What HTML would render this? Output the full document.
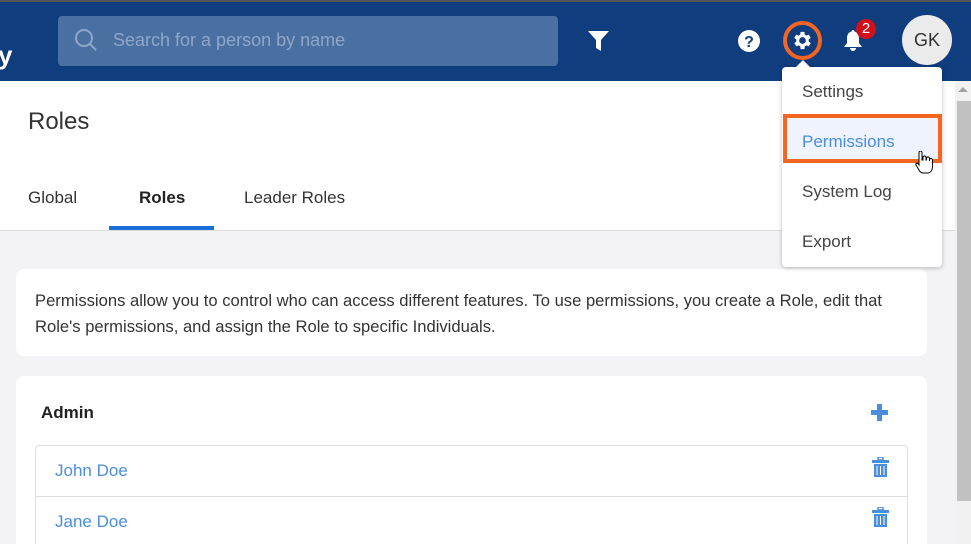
<!DOCTYPE html>
<html style="width:971px;height:544px;overflow:hidden"><head><style>
*{box-sizing:border-box;margin:0;padding:0}
body{width:971px;height:544px;overflow:hidden;font-family:"Liberation Sans",sans-serif;background:#f3f3f5;position:relative}
.hdr{position:absolute;left:0;top:0;width:971px;height:81px;background:#0f3d7e;border-top:2px solid #555}
.abs{position:absolute}
</style></head><body>
<div class="hdr"></div>
<div class="abs" style="left:-2px;top:40px;color:#fff;font-size:26px;font-weight:bold">y</div>
<div class="abs" style="left:58px;top:16px;width:500px;height:50px;border-radius:4px;background:#4a6fa1"></div>
<svg class="abs" style="left:74px;top:28px" width="24" height="24" viewBox="0 0 24 24"><circle cx="10" cy="10" r="8" fill="none" stroke="#8ea7c9" stroke-width="2"/><line x1="16" y1="16" x2="22" y2="22" stroke="#8ea7c9" stroke-width="2"/></svg>
<div class="abs" style="left:113px;top:30px;color:#8ea7c9;font-size:18px">Search for a person by name</div>
<svg class="abs" style="left:588px;top:31px" width="21" height="20" viewBox="0 0 21 20"><path d="M0 0H21L13 9V20L8 17V9Z" fill="#fff"/></svg>
<svg class="abs" style="left:738px;top:30px" width="22" height="22" viewBox="0 0 22 22"><circle cx="11" cy="11" r="11" fill="#fff"/><text x="11" y="17" font-size="16" font-weight="bold" text-anchor="middle" fill="#0f3d7e" font-family="Liberation Sans">?</text></svg>
<div class="abs" style="left:783px;top:21px;width:39px;height:39px;border-radius:50%;border:4px solid #f26522"></div>
<svg class="abs" style="left:791px;top:29px" width="23" height="23" viewBox="0 0 24 24"><path fill="#fff" d="M19.4 13a7.5 7.5 0 0 0 0-2l2.1-1.6-2-3.5-2.5 1a7 7 0 0 0-1.7-1L15 3h-4l-.4 2.9a7 7 0 0 0-1.7 1l-2.5-1-2 3.5L6.6 11a7.5 7.5 0 0 0 0 2l-2.1 1.6 2 3.5 2.5-1a7 7 0 0 0 1.7 1L11 21h4l.4-2.9a7 7 0 0 0 1.7-1l2.5 1 2-3.5zM13 15.5a3.5 3.5 0 1 1 0-7 3.5 3.5 0 0 1 0 7z" transform="translate(-1 0)"/></svg>
<svg class="abs" style="left:843px;top:30px" width="20" height="22" viewBox="0 0 20 22"><path d="M10 0c1 0 1.5.7 1.5 1.5C15 2.5 16 5 16 9v4l3 4H1l3-4V9c0-4 1-6.5 4.5-7.5C8.5.7 9 0 10 0zM7 18h6a3 3 0 0 1-6 0z" fill="#fff"/></svg>
<div class="abs" style="left:856px;top:19px;width:20px;height:20px;border-radius:50%;background:#d0101b;color:#fff;font-size:15px;text-align:center;line-height:20px">2</div>
<div class="abs" style="left:902px;top:15px;width:50px;height:50px;border-radius:50%;background:#ebebeb;color:#333;font-size:18px;text-align:center;line-height:50px">GK</div>
<div class="abs" style="left:0;top:81px;width:955px;height:150px;background:#fff;border-bottom:1px solid #ddd"></div>
<div class="abs" style="left:28px;top:108px;font-size:24px;color:#333">Roles</div>
<div class="abs" style="left:28px;top:188px;font-size:17px;color:#333">Global</div>
<div class="abs" style="left:139px;top:188px;font-size:17px;color:#222;font-weight:bold">Roles</div>
<div class="abs" style="left:109px;top:226px;width:105px;height:4px;background:#1a6ed8"></div>
<div class="abs" style="left:244px;top:188px;font-size:17px;color:#333">Leader Roles</div>
<div class="abs" style="left:955px;top:81px;width:16px;height:463px;background:#f1f1f1"></div>
<div class="abs" style="left:957px;top:101px;width:14px;height:400px;background:#c1c1c1"></div>
<div class="abs" style="left:958px;top:87px;width:0;height:0;border-left:5px solid transparent;border-right:5px solid transparent;border-bottom:5px solid #a3a3a3"></div>
<div class="abs" style="left:16px;top:269px;width:911px;height:87px;background:#fff;border-radius:8px;padding:19px 19px;font-size:16.6px;line-height:26px;color:#333">Permissions allow you to control who can access different features. To use permissions, you create a Role, edit that Role's permissions, and assign the Role to specific Individuals.</div>
<div class="abs" style="left:16px;top:376px;width:911px;height:168px;background:#fff;border-radius:8px 8px 0 0"></div>
<div class="abs" style="left:41px;top:403px;font-size:17px;color:#222;font-weight:bold">Admin</div>
<div class="abs" style="left:871px;top:404px;width:17px;height:17px">
<div class="abs" style="left:6px;top:0;width:5px;height:17px;background:#4a8ee0"></div><div class="abs" style="left:0;top:6px;width:17px;height:5px;background:#4a8ee0"></div></div>
<div class="abs" style="left:35px;top:445px;width:873px;height:99px;border:1px solid #ddd;border-bottom:none;border-radius:4px 4px 0 0"></div>
<div class="abs" style="left:35px;top:496px;width:873px;height:1px;background:#ddd"></div>
<div class="abs" style="left:55px;top:461px;font-size:17px;color:#4a8ee0">John Doe</div>
<div class="abs" style="left:55px;top:512px;font-size:17px;color:#4a8ee0">Jane Doe</div>
<svg class="abs" style="left:872px;top:457px" width="17" height="20" viewBox="0 0 17 20"><rect x="6" y="0" width="5" height="3" fill="none" stroke="#4a8ee0" stroke-width="1.5"/><rect x="0" y="3" width="17" height="3" fill="#4a8ee0"/><path d="M2 7h13v13H2z" fill="#4a8ee0"/><path d="M5 9v9M8.5 9v9M12 9v9" stroke="#fff"/></svg>
<svg class="abs" style="left:872px;top:507px" width="17" height="20" viewBox="0 0 17 20"><rect x="6" y="0" width="5" height="3" fill="none" stroke="#4a8ee0" stroke-width="1.5"/><rect x="0" y="3" width="17" height="3" fill="#4a8ee0"/><path d="M2 7h13v13H2z" fill="#4a8ee0"/><path d="M5 9v9M8.5 9v9M12 9v9" stroke="#fff"/></svg>
<div class="abs" style="left:782px;top:67px;width:160px;height:200px;background:#fff;border-radius:4px;box-shadow:0 1px 5px rgba(0,0,0,.25)"></div>
<div class="abs" style="left:796px;top:60px;width:0;height:0;border-left:7px solid transparent;border-right:7px solid transparent;border-bottom:7px solid #fff"></div>
<div class="abs" style="left:802px;top:82px;font-size:17px;color:#444">Settings</div>
<div class="abs" style="left:783px;top:114px;width:159px;height:49px;background:#eef3fd;border:4px solid #f26522"></div>
<div class="abs" style="left:802px;top:132px;font-size:17px;color:#4a8ee0">Permissions</div>
<div class="abs" style="left:802px;top:182px;font-size:17px;color:#444">System Log</div>
<div class="abs" style="left:802px;top:232px;font-size:17px;color:#444">Export</div>
<svg class="abs" style="left:915px;top:151px" width="18" height="24" viewBox="0 0 18 24"><path d="M4 1.5a1.5 1.5 0 0 1 3 0V9h1V6.5a1.5 1.5 0 0 1 3 0V9h.5V7.5a1.5 1.5 0 0 1 3 0V10V9a1.5 1.5 0 0 1 3 0v7c0 3-2 6-5 6H8c-2 0-3-1-4-3L1 14c-.8-1.4.8-2.6 2-1.4L4 14z" fill="#fff" stroke="#000" stroke-width="1"/></svg>
</body></html>
